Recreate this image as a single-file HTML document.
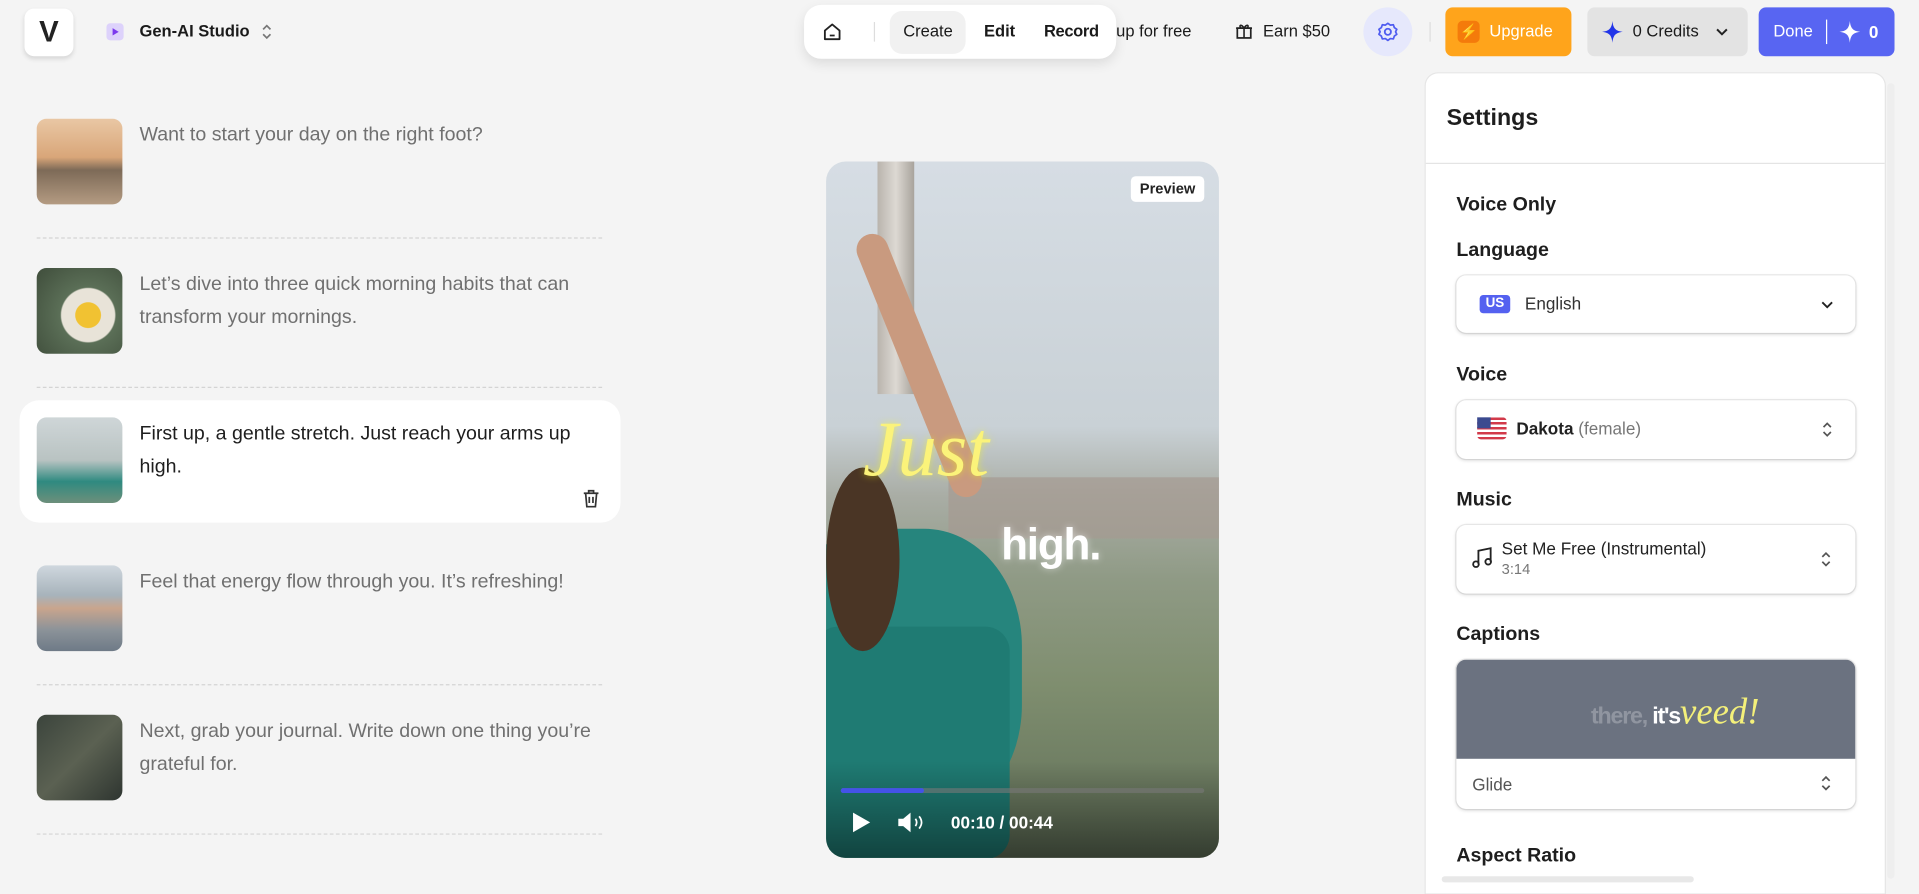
<!DOCTYPE html>
<html><head><meta charset="utf-8"><style>
html,body{margin:0;padding:0;width:1919px;height:894px;overflow:hidden;background:#f4f4f4;font-family:"Liberation Sans",sans-serif;}
#w{position:absolute;left:0;top:0;width:1568px;height:730px;transform:scale(1.22385);transform-origin:0 0;}
.a{position:absolute;}
.t{font-size:14px;color:#1a1a1a;font-weight:600;}
.item{position:absolute;left:30px;width:470px;}
.th{position:absolute;left:0;top:0;width:70px;height:70px;border-radius:8px;}
.tx{position:absolute;left:84px;top:0;width:380px;font-size:16px;line-height:27px;color:#707070;}
.dot{position:absolute;left:30px;width:462px;border-top:1px dashed #d4d4d4;}
.lbl{position:absolute;left:1190px;font-size:16px;font-weight:700;color:#1e1e1e;}
.dd{position:absolute;left:1190px;width:326px;background:#fff;border-radius:8px;box-shadow:0 1px 3px rgba(0,0,0,.15),0 0 0 1px #eee;}
</style></head><body><div id="w">
<div class="a" style="left:20px;top:7px;width:40px;height:39px;background:#fff;border-radius:8px;box-shadow:0 2px 4px rgba(0,0,0,.12);font-weight:900;font-size:24px;text-align:center;line-height:39px;color:#222">V</div>
<div class="a" style="left:87px;top:19px;width:14px;height:14px;background:#ddd2fb;border-radius:3px"><div style="margin:4px 0 0 5px;width:0;height:0;border-left:5px solid #7c3aed;border-top:3px solid transparent;border-bottom:3px solid transparent"></div></div>
<div class="a t" style="left:114px;top:18px;font-size:13.5px">Gen-AI Studio</div>
<svg class="a" style="left:212px;top:17px" width="12" height="18" viewBox="0 0 12 18"><path d="M3 7l3-3 3 3M3 11l3 3 3-3" fill="none" stroke="#777" stroke-width="1.4"/></svg>
<div class="a t" style="left:912px;top:18px;font-weight:500;font-size:13.5px">up for free</div>
<div class="a" style="left:657px;top:4px;width:255px;height:44px;background:#fff;border-radius:14px;box-shadow:0 4px 10px rgba(0,0,0,.1)"></div>
<svg class="a" style="left:671px;top:17px" width="18" height="18" viewBox="0 0 18 18"><path d="M3 8l6-5 6 5v7H3z" fill="none" stroke="#222" stroke-width="1.5" stroke-linejoin="round"/><path d="M7 12h4" stroke="#222" stroke-width="1.5"/></svg>
<div class="a" style="left:714px;top:18px;width:1px;height:16px;background:#ddd"></div>
<div class="a" style="left:727px;top:9px;width:62px;height:35px;background:#f1f1f1;border-radius:10px"></div>
<div class="a t" style="left:738px;top:18px;font-weight:500;font-size:13.5px">Create</div>
<div class="a t" style="left:804px;top:18px;font-size:13.5px">Edit</div>
<div class="a t" style="left:853px;top:18px;font-size:13.5px;letter-spacing:-0.3px">Record</div>
<svg class="a" style="left:1009px;top:18px" width="15" height="15" viewBox="0 0 15 15"><rect x="2" y="5" width="11" height="8" fill="none" stroke="#222" stroke-width="1.4"/><path d="M1 5h13M7.5 5v8M7.5 5C5 1 3 3 5 5M7.5 5C10 1 12 3 10 5" fill="none" stroke="#222" stroke-width="1.3"/></svg>
<div class="a t" style="left:1032px;top:18px;font-weight:500;font-size:13.5px">Earn $50</div>
<div class="a" style="left:1114px;top:6px;width:40px;height:40px;border-radius:50%;background:#e6e8fc"></div>
<svg class="a" style="left:1125px;top:17px" width="18" height="18" viewBox="0 0 18 18"><circle cx="9" cy="9" r="2.5" fill="none" stroke="#4f5cf0" stroke-width="1.5"/><path d="M9 2l2 1.5 2.5-.3.8 2.3 2 1.5-1 2 1 2-2 1.5-.8 2.3-2.5-.3L9 16l-2-1.5-2.5.3-.8-2.3-2-1.5 1-2-1-2 2-1.5.8-2.3 2.5.3z" fill="none" stroke="#4f5cf0" stroke-width="1.4" stroke-linejoin="round"/></svg>
<div class="a" style="left:1168px;top:18px;width:1px;height:16px;background:#ddd"></div>
<div class="a" style="left:1181px;top:6px;width:103px;height:40px;background:#ffa41b;border-radius:6px"></div>
<div class="a" style="left:1191px;top:17px;width:18px;height:18px;background:#f47b0b;border-radius:4px;color:#fff;font-size:12px;text-align:center;line-height:18px">⚡</div>
<div class="a t" style="left:1217px;top:18px;color:#fff;font-weight:500;font-size:13.5px">Upgrade</div>
<div class="a" style="left:1297px;top:6px;width:131px;height:40px;background:#e3e3e3;border-radius:6px"></div>
<svg class="a" style="left:1309px;top:17px" width="17" height="18" viewBox="0 0 17 18"><path d="M8.5 0C9 6 11 8.5 17 9 11 9.5 9 12 8.5 18 8 12 6 9.5 0 9 6 8.5 8 6 8.5 0z" fill="#2235e8"/></svg>
<div class="a t" style="left:1334px;top:18px;font-weight:500;font-size:13.5px">0 Credits</div>
<svg class="a" style="left:1401px;top:20px" width="12" height="12" viewBox="0 0 12 12"><path d="M2 4l4 4 4-4" fill="none" stroke="#222" stroke-width="1.6"/></svg>
<div class="a" style="left:1437px;top:6px;width:111px;height:40px;background:#5865f2;border-radius:6px"></div>
<div class="a t" style="left:1449px;top:18px;color:#fff;font-weight:500;font-size:13.5px">Done</div>
<div class="a" style="left:1492px;top:16px;width:1px;height:20px;background:#fff"></div>
<svg class="a" style="left:1503px;top:17px" width="17" height="18" viewBox="0 0 17 18"><path d="M8.5 0C9 6 11 8.5 17 9 11 9.5 9 12 8.5 18 8 12 6 9.5 0 9 6 8.5 8 6 8.5 0z" fill="#fff"/></svg>
<div class="a t" style="left:1527px;top:18px;color:#fff">0</div>

<div class="a" style="left:16px;top:327px;width:491px;height:100px;background:#fff;border-radius:16px"></div>
<div class="item" style="top:97px"><div class="th" style="background:linear-gradient(180deg,#e9c7a4 0%,#d9a679 45%,#7d6a57 60%,#b49b82 100%)"></div><div class="tx">Want to start your day on the right foot?</div></div>
<div class="dot" style="top:194px"></div>
<div class="item" style="top:219px"><div class="th" style="background:radial-gradient(circle at 60% 55%,#f1c232 0 18%,#e8e3d8 19% 38%,#5b6f57 40%,#3f4d3b 100%)"></div><div class="tx">Let’s dive into three quick morning habits that can transform your mornings.</div></div>
<div class="dot" style="top:316px"></div>
<div class="item" style="top:341px"><div class="th" style="background:linear-gradient(180deg,#cfd6d8 0%,#b9c3c2 50%,#2f8a80 75%,#6d8f7b 100%)"></div><div class="tx" style="color:#1e1e1e">First up, a gentle stretch. Just reach your arms up high.</div></div>
<svg class="a" style="left:475px;top:399px" width="16" height="17" viewBox="0 0 16 17"><path d="M2 4h12M6 4V2h4v2M3.5 4l1 11h7l1-11M6.5 7v5M9.5 7v5" fill="none" stroke="#333" stroke-width="1.4"/></svg>
<div class="item" style="top:462px"><div class="th" style="background:linear-gradient(180deg,#cfd7de 0%,#a7b3bb 35%,#c9a58d 50%,#8c9399 75%,#6e7a87 100%)"></div><div class="tx">Feel that energy flow through you. It’s refreshing!</div></div>
<div class="dot" style="top:559px"></div>
<div class="item" style="top:584px"><div class="th" style="background:linear-gradient(135deg,#3b443c 0%,#5b6152 50%,#2e3530 100%)"></div><div class="tx">Next, grab your journal. Write down one thing you’re grateful for.</div></div>
<div class="dot" style="top:681px"></div>

<div class="a" style="left:675px;top:132px;width:321px;height:569px;border-radius:16px;overflow:hidden;background:linear-gradient(180deg,#d6dde4 0%,#c9d1d6 38%,#a9ada5 48%,#8f9a85 60%,#7f8e6f 75%,#5f6e57 100%)">
 <div class="a" style="left:42px;top:0;width:30px;height:190px;background:linear-gradient(90deg,#b9b4ad,#ddd9d3,#a8a39c)"></div>
 <div class="a" style="left:100px;top:258px;width:221px;height:50px;background:#a59a92;opacity:.7"></div>
 <div class="a" style="left:-40px;top:300px;width:200px;height:240px;border-radius:40%;background:#26857d"></div>
 <div class="a" style="left:-10px;top:380px;width:160px;height:190px;background:#1f7b73;border-radius:20px"></div>
 <div class="a" style="left:0;top:250px;width:60px;height:150px;border-radius:50%;background:#4a3525"></div>
 <div class="a" style="left:20px;top:60px;width:26px;height:230px;background:#c99a7f;transform:rotate(-22deg);transform-origin:top;border-radius:13px"></div>
 <div class="a" style="left:0;top:490px;width:321px;height:79px;background:linear-gradient(180deg,rgba(0,0,0,0),rgba(0,0,0,.45))"></div>
 <div class="a" style="left:249px;top:12px;width:60px;height:21px;background:#fff;border-radius:4px;font-size:12px;font-weight:700;text-align:center;line-height:21px;color:#222">Preview</div>
 <div class="a" style="left:30px;top:198px;font-family:'Liberation Serif',serif;font-style:italic;font-size:64px;color:#fbf37a;text-shadow:0 0 6px rgba(255,255,0,.5)">Just</div>
 <div class="a" style="left:143px;top:292px;font-size:36px;font-weight:700;color:#fff;letter-spacing:-1px;text-shadow:0 0 6px rgba(255,255,255,.5)">high.</div>
 <div class="a" style="left:12px;top:512px;width:297px;height:4px;background:rgba(120,120,120,.6);border-radius:2px"><div style="width:68px;height:4px;background:#4453e8;border-radius:2px"></div></div>
 <svg class="a" style="left:21px;top:531px" width="16" height="18" viewBox="0 0 16 18"><path d="M1 1l14 8-14 8z" fill="#fff"/></svg>
 <svg class="a" style="left:58px;top:531px" width="24" height="18" viewBox="0 0 24 18"><path d="M1 6h4l6-5v16l-6-5H1z" fill="#fff"/><path d="M15 6q2 3 0 6M18 4q4 5 0 10" fill="none" stroke="#fff" stroke-width="1.4"/></svg>
 <div class="a" style="left:102px;top:532px;font-size:14px;font-weight:700;color:#fff">00:10 / 00:44</div>
</div>

<div class="a" style="left:1165px;top:60px;width:375px;height:670px;background:#fff;border-radius:10px 10px 0 0;box-shadow:0 0 0 1px #e6e6e6"></div>
<div class="a" style="left:1165px;top:133px;width:375px;height:1px;background:#e4e4e4"></div>
<div class="a" style="left:1542px;top:68px;width:6px;height:650px;background:#eee;border-radius:3px"></div>
<div class="a" style="left:1178px;top:716px;width:206px;height:5px;background:#e8e8e8;border-radius:3px"></div>
<div class="a" style="left:1182px;top:86px;font-size:19px;font-weight:700;color:#1e1e1e">Settings</div>
<div class="lbl" style="top:159px">Voice Only</div>
<div class="lbl" style="top:196px">Language</div>
<div class="dd" style="top:225px;height:47px">
 <div class="a" style="left:19px;top:16px;width:25px;height:15px;background:#5461f0;border-radius:3px;color:#fff;font-size:11px;font-weight:700;text-align:center;line-height:15px">US</div>
 <div class="a" style="left:56px;top:15px;font-size:14px;color:#333">English</div>
 <svg class="a" style="left:297px;top:18px" width="12" height="12" viewBox="0 0 12 12"><path d="M2 4l4 4 4-4" fill="none" stroke="#222" stroke-width="1.5"/></svg>
</div>
<div class="lbl" style="top:298px">Voice</div>
<div class="dd" style="top:327px;height:48px">
 <div class="a" style="left:17px;top:14px;width:24px;height:18px;border-radius:3px;background:repeating-linear-gradient(180deg,#d23a4a 0 2px,#fff 2px 4px)"><div style="width:11px;height:9px;background:#3b4a8f"></div></div>
 <div class="a" style="left:49px;top:15px;font-size:14px;color:#222;font-weight:600">Dakota <span style="color:#777;font-weight:400">(female)</span></div>
 <svg class="a" style="left:297px;top:14px" width="12" height="20" viewBox="0 0 12 20"><path d="M3 8l3-3 3 3M3 12l3 3 3-3" fill="none" stroke="#555" stroke-width="1.4"/></svg>
</div>
<div class="lbl" style="top:400px">Music</div>
<div class="dd" style="top:429px;height:56px">
 <svg class="a" style="left:12px;top:18px" width="18" height="18" viewBox="0 0 18 18"><path d="M6 14V3l10-2v11" fill="none" stroke="#222" stroke-width="1.5"/><circle cx="4" cy="14" r="2.3" fill="none" stroke="#222" stroke-width="1.5"/><circle cx="14" cy="12" r="2.3" fill="none" stroke="#222" stroke-width="1.5"/></svg>
 <div class="a" style="left:37px;top:11px;font-size:14px;color:#222;font-weight:500">Set Me Free (Instrumental)</div>
 <div class="a" style="left:37px;top:29px;font-size:12px;color:#777">3:14</div>
 <svg class="a" style="left:296px;top:18px" width="12" height="20" viewBox="0 0 12 20"><path d="M3 8l3-3 3 3M3 12l3 3 3-3" fill="none" stroke="#555" stroke-width="1.4"/></svg>
</div>
<div class="lbl" style="top:510px">Captions</div>
<div class="dd" style="top:539px;height:122px;overflow:hidden">
 <div class="a" style="left:0;top:0;width:326px;height:81px;background:#6b7280"></div>
 <div class="a" style="left:110px;top:26px;font-size:19px;font-weight:700;letter-spacing:-1px;color:rgba(255,255,255,.25)">there, <span style="color:#fff">it's</span><span style="font-family:'Liberation Serif',serif;font-style:italic;font-weight:400;font-size:30px;color:#f4f07a;letter-spacing:0">veed!</span></div>
 <div class="a" style="left:13px;top:94px;font-size:14px;color:#555">Glide</div>
 <svg class="a" style="left:296px;top:91px" width="12" height="20" viewBox="0 0 12 20"><path d="M3 8l3-3 3 3M3 12l3 3 3-3" fill="none" stroke="#555" stroke-width="1.4"/></svg>
</div>
<div class="lbl" style="top:691px">Aspect Ratio</div>
</div></body></html>
